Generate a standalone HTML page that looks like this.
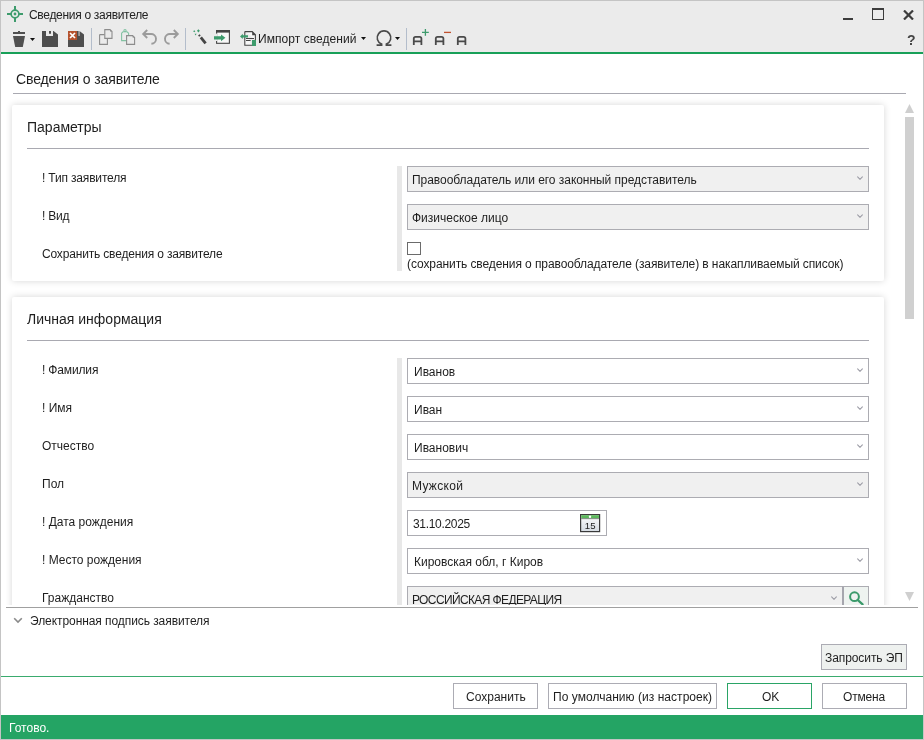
<!DOCTYPE html>
<html><head><meta charset="utf-8">
<style>
*{box-sizing:border-box;margin:0;padding:0}
html,body{width:924px;height:740px;overflow:hidden;background:#fff}
body{position:relative;-webkit-font-smoothing:antialiased;font-family:"Liberation Sans",sans-serif;color:#1e1e1e}
.a{position:absolute}
.t{position:absolute;white-space:pre;font-size:12px;line-height:12px}
.h{font-size:14px;line-height:14px}
.fld{position:absolute;border:1px solid #acacb2;background:#fff;height:26px}
.dis{background:#f0f0f0}
.chev{position:absolute;right:5px;top:8.5px;width:6px;height:4px}
.btn{position:absolute;border:1px solid #acacb4;background:#fff;height:26px;top:683px;font-size:12px;text-align:center}
.card{position:absolute;left:12px;width:872px;background:#fff;border-radius:2px;box-shadow:0 0 7px rgba(0,0,0,.16)}
.sep{position:absolute;height:1px;background:#a9a9b1}
</style></head><body>
<div id="root" class="a" style="left:0;top:0;width:924px;height:740px;will-change:transform">
<!-- window border -->
<div class="a" style="left:0;top:0;width:924px;height:740px;border:1px solid #c4c4c4"></div>
<!-- title + toolbar bg -->
<div class="a" style="left:1px;top:1px;width:922px;height:51px;background:#ebebeb"></div>
<div class="a" style="left:1px;top:52px;width:922px;height:2px;background:#18a058"></div>

<!-- title icon -->
<svg class="a" style="left:6px;top:5px" width="18" height="18" viewBox="0 0 18 18">
 <g fill="none" stroke="#3d9b6c" stroke-width="2">
  <circle cx="9" cy="9" r="3.9" stroke-width="1.7"/>
  <path d="M1 9h4M13 9h4M9 1v4M9 13v4"/>
 </g>
 <circle cx="9" cy="9" r="1.4" fill="#3d9b6c"/>
</svg>
<div class="t" style="left:29px;top:9px;color:#222;letter-spacing:-0.3px">Сведения о заявителе</div>

<!-- window controls -->
<div class="a" style="left:843px;top:18px;width:10px;height:2px;background:#3c3c3c"></div>
<div class="a" style="left:872px;top:8px;width:12px;height:12px;border:1px solid #3c3c3c;border-top-width:2px"></div>
<svg class="a" style="left:903px;top:10px" width="11" height="10" viewBox="0 0 11 10"><path d="M1 0.5L10 9.5M10 0.5L1 9.5" stroke="#3c3c3c" stroke-width="2.2"/></svg>
<div class="t" style="left:907px;top:33px;font-size:14px;line-height:14px;font-weight:bold;color:#444">?</div>

<!-- TOOLBAR -->
<svg class="a" style="left:0;top:0" width="924" height="54" viewBox="0 0 924 54">
 <!-- trash -->
 <g fill="#505050">
  <rect x="18" y="31" width="2" height="1.2"/>
  <rect x="13" y="32" width="12" height="2"/>
  <path d="M13 36H25L22.8 47H15.2Z"/>
  <path d="M30 38H35L32.5 41Z" fill="#111"/>
 </g>
 <!-- save -->
 <path fill="#4e4e4e" fill-rule="evenodd" d="M42 31H53.5L58 34.5V47H42ZM46 31V36H53V31ZM49 31H51V33.5H49Z"/>
 <rect x="49" y="31" width="2" height="2.5" fill="#4e4e4e"/>
 <!-- save x -->
 <path fill="#4e4e4e" d="M68 40H77V31H78.6V36H79.5V31L84 34.5V47H68Z"/>
 <rect x="68" y="31" width="9" height="9" fill="#b5532f"/>
 <path d="M70 33L75 38M75 33L70 38" stroke="#fff" stroke-width="1.7"/>
 <!-- separators -->
 <rect x="91" y="28" width="1" height="22" fill="#b3bdcb"/>
 <rect x="185" y="28" width="1" height="22" fill="#b3bdcb"/>
 <rect x="406" y="28" width="1" height="22" fill="#b3bdcb"/>
 <!-- copy -->
 <g fill="none" stroke="#8c8c8c" stroke-width="1.1">
  <path d="M99.6 34.6H104.6M99.6 34.6V44.4H107.4V38.8"/>
  <path d="M104.8 29.6H110L112 31.6V38.4H104.8Z" fill="#ebebeb"/>
 </g>
 <path d="M110 29.6V31.6H112Z" fill="#8c8c8c"/>
 <!-- paste -->
 <path d="M126.6 40.6H121.6V33.2L123 31.8H127L128.6 33.2V35.4" fill="none" stroke="#82c2a2" stroke-width="1.1"/><circle cx="125" cy="30.6" r="1.1" fill="none" stroke="#82c2a2" stroke-width="1.1"/>
 <path d="M126.6 35.6H132.6L134.6 37.6V44.4H126.6Z" fill="#ebebeb" stroke="#8c8c8c" stroke-width="1.1"/>
 <path d="M132.6 35.6V37.6H134.6Z" fill="#8c8c8c"/>
 <!-- undo / redo -->
 <g fill="none" stroke="#9b9b9b" stroke-width="1.9">
  <path d="M147.2 30L143.2 34L147.2 38M143.4 34H150.8A4.9 4.9 0 0 1 151.4 43.8"/>
  <path d="M173.8 30L177.8 34L173.8 38M177.6 34H170.2A4.9 4.9 0 0 0 169.6 43.8"/>
 </g>
 <!-- magic wand -->
 <path d="M200.8 37.4L205.6 43.4" stroke="#454545" stroke-width="2.8" stroke-linecap="butt"/>
 <path d="M198.6 36.2L200.2 34.8" stroke="#454545" stroke-width="1.6"/>
 <g fill="#3d9b6c">
  <path d="M198.4 29.2L199.8 30.8L198.4 32.6L197 30.8Z"/>
  <path d="M194.2 30.3L195.4 31.3L194.2 32.3L193.2 31.3Z"/>
  <path d="M194.6 33.8H196.6L195.6 35.4Z"/>
 </g>
 <!-- window arrow -->
 <rect x="216.6" y="30.6" width="12.8" height="12.7" fill="#f7f7f7" stroke="#454545" stroke-width="1.1"/>
 <rect x="216" y="30" width="14" height="2.6" fill="#454545"/>
 <rect x="214" y="33.6" width="3.2" height="7.4" fill="#ebebeb"/>
 <path d="M214 36.2H221V34.4L225.4 37.8L221 41.2V39.6H214Z" fill="#3d9b6c"/>
 <!-- import -->
 <path d="M244.8 31.6H252.2L255.4 34.8V40M244.8 31.6V45.2H252" fill="#f7f7f7" stroke="#454545" stroke-width="1.1"/>
 <path d="M252.2 31.2V35.2H255.8Z" fill="#454545"/>
 <rect x="246" y="38" width="8" height="1" fill="#454545"/>
 <rect x="246" y="40" width="4.6" height="1" fill="#454545"/>
 <path d="M240 36.4L242.8 33.8V35.2H248V37.6H242.8V39Z" fill="#3d9b6c"/>
 <rect x="252" y="40" width="4" height="6" fill="#3d9b6c"/>
 <!-- import dropdown arrow -->
 <path d="M361 37H366L363.5 40Z" fill="#111"/>
 <!-- omega -->
 <path d="M376.6 45.1H381.6V44.1A6.8 6.8 0 1 1 386.4 44.1V45.1H391.4" fill="none" stroke="#4a4a4a" stroke-width="1.7"/>
 <path d="M395 37H400L397.5 40Z" fill="#111"/>
 <!-- A+ A- A -->
 <g fill="none" stroke="#4a4a4a" stroke-width="1.8">
  <path d="M413.8 45V38.6Q413.8 36.8 415.6 36.8H419.6Q421.4 36.8 421.4 38.6V45M413.8 41.3H421.4"/>
  <path d="M435.8 45V38.6Q435.8 36.8 437.6 36.8H441.6Q443.4 36.8 443.4 38.6V45M435.8 41.3H443.4"/>
  <path d="M457.8 45V38.6Q457.8 36.8 459.6 36.8H463.6Q465.4 36.8 465.4 38.6V45M457.8 41.3H465.4"/>
 </g>
 <path d="M422 32.4H428.8M425.4 29V35.8" stroke="#3d9b6c" stroke-width="1.3"/>
 <path d="M444 32.4H451" stroke="#c0502e" stroke-width="1.3"/>
</svg>
<div class="t" style="left:258px;top:33px;color:#222;letter-spacing:0.05px">Импорт сведений</div>

<!-- heading -->
<div class="t h" style="left:16px;top:72px;letter-spacing:-0.12px">Сведения о заявителе</div>
<div class="sep" style="left:13px;top:93px;width:893px"></div>

<!-- scroll viewport -->
<div class="a" style="left:6px;top:96px;width:899px;height:509px;overflow:hidden">
 <div class="a" style="left:-6px;top:-96px;width:924px;height:740px">
  <!-- card 1 -->
  <div class="card" style="top:105px;height:176px"></div>
  <div class="t h" style="left:27px;top:120px">Параметры</div>
  <div class="sep" style="left:27px;top:148px;width:842px"></div>
  <div class="t" style="left:42px;top:172px;letter-spacing:-0.17px">! Тип заявителя</div>
  <div class="t" style="left:42px;top:210px;letter-spacing:-0.25px">! Вид</div>
  <div class="t" style="left:42px;top:248px;letter-spacing:-0.17px">Сохранить сведения о заявителе</div>
  <div class="a" style="left:397px;top:166px;width:5px;height:105px;background:#e8e8e8"></div>
  <div class="fld dis" style="left:407px;top:166px;width:462px"><div class="t" style="left:4px;top:7px;letter-spacing:-0.04px">Правообладатель или его законный представитель</div><svg class="chev" viewBox="0 0 6 4"><path d="M0.4 0.5L3 3.3L5.6 0.5" fill="none" stroke="#9c9ca6" stroke-width="1.1"/></svg></div>
  <div class="fld dis" style="left:407px;top:204px;width:462px"><div class="t" style="left:4px;top:7px">Физическое лицо</div><svg class="chev" viewBox="0 0 6 4"><path d="M0.4 0.5L3 3.3L5.6 0.5" fill="none" stroke="#9c9ca6" stroke-width="1.1"/></svg></div>
  <div class="a" style="left:407px;top:242px;width:14px;height:13px;border:1px solid #6b6b6b;background:#fff"></div>
  <div class="t" style="left:407px;top:258px;letter-spacing:-0.09px">(сохранить сведения о правообладателе (заявителе) в накапливаемый список)</div>

  <!-- card 2 -->
  <div class="card" style="top:297px;height:340px"></div>
  <div class="t h" style="left:27px;top:312px">Личная информация</div>
  <div class="sep" style="left:27px;top:340px;width:842px"></div>
  <div class="t" style="left:42px;top:364px;letter-spacing:-0.15px">! Фамилия</div>
  <div class="t" style="left:42px;top:402px">! Имя</div>
  <div class="t" style="left:42px;top:440px">Отчество</div>
  <div class="t" style="left:42px;top:478px">Пол</div>
  <div class="t" style="left:42px;top:516px">! Дата рождения</div>
  <div class="t" style="left:42px;top:554px">! Место рождения</div>
  <div class="t" style="left:42px;top:592px">Гражданство</div>
  <div class="a" style="left:397px;top:358px;width:5px;height:260px;background:#e8e8e8"></div>
  <div class="fld" style="left:407px;top:358px;width:462px"><div class="t" style="left:6px;top:7px">Иванов</div><svg class="chev" viewBox="0 0 6 4"><path d="M0.4 0.5L3 3.3L5.6 0.5" fill="none" stroke="#9c9ca6" stroke-width="1.1"/></svg></div>
  <div class="fld" style="left:407px;top:396px;width:462px"><div class="t" style="left:6px;top:7px">Иван</div><svg class="chev" viewBox="0 0 6 4"><path d="M0.4 0.5L3 3.3L5.6 0.5" fill="none" stroke="#9c9ca6" stroke-width="1.1"/></svg></div>
  <div class="fld" style="left:407px;top:434px;width:462px"><div class="t" style="left:6px;top:7px">Иванович</div><svg class="chev" viewBox="0 0 6 4"><path d="M0.4 0.5L3 3.3L5.6 0.5" fill="none" stroke="#9c9ca6" stroke-width="1.1"/></svg></div>
  <div class="fld dis" style="left:407px;top:472px;width:462px"><div class="t" style="left:4px;top:7px;letter-spacing:0.3px">Мужской</div><svg class="chev" viewBox="0 0 6 4"><path d="M0.4 0.5L3 3.3L5.6 0.5" fill="none" stroke="#9c9ca6" stroke-width="1.1"/></svg></div>
  <div class="fld" style="left:407px;top:510px;width:200px"><div class="t" style="left:5px;top:7px;letter-spacing:-0.32px">31.10.2025</div><svg class="a" style="left:172px;top:3px" width="21" height="19" viewBox="0 0 21 19"><defs><linearGradient id="cg" x1="0" y1="0" x2="0" y2="1"><stop offset="0" stop-color="#fff"/><stop offset="1" stop-color="#d5dbe2"/></linearGradient></defs><rect x="0.6" y="0.6" width="19" height="17" fill="url(#cg)" stroke="#3a3a3a" stroke-width="1.2"/><rect x="1.2" y="1.2" width="17.8" height="3.2" fill="#5cb85c"/><rect x="1.2" y="4.4" width="17.8" height="0.7" fill="#666"/><circle cx="10" cy="2.8" r="1.2" fill="#fff"/><text x="10.2" y="15" text-anchor="middle" style="font-family:'Liberation Sans';font-size:9.6px" fill="#222">15</text></svg></div>
  <div class="fld" style="left:407px;top:548px;width:462px"><div class="t" style="left:6px;top:7px">Кировская обл, г Киров</div><svg class="chev" viewBox="0 0 6 4"><path d="M0.4 0.5L3 3.3L5.6 0.5" fill="none" stroke="#9c9ca6" stroke-width="1.1"/></svg></div>
  <div class="fld dis" style="left:407px;top:586px;width:437px"><div class="t" style="left:4px;top:7px;letter-spacing:-0.62px">РОССИЙСКАЯ ФЕДЕРАЦИЯ</div><svg class="chev" style="right:6px" viewBox="0 0 6 4"><path d="M0.4 0.5L3 3.3L5.6 0.5" fill="none" stroke="#9c9ca6" stroke-width="1.1"/></svg></div>
  <div class="fld" style="left:842px;top:586px;width:27px;background:#eef3f0;border-left:2px solid #a6a6ae"><svg class="a" style="left:3px;top:2px" width="18" height="18" viewBox="0 0 18 18"><circle cx="7.5" cy="7.7" r="4.4" fill="none" stroke="#3a9a6a" stroke-width="2"/><path d="M10.6 10.9L15.6 15.4" stroke="#3a9a6a" stroke-width="2.2" stroke-linecap="round"/></svg></div>
 </div>
</div>

<!-- scrollbar -->
<svg class="a" style="left:904px;top:103px" width="11" height="11" viewBox="0 0 11 11"><path d="M1 10H10L5.5 1Z" fill="#cfcfcf"/></svg>
<svg class="a" style="left:904px;top:591px" width="11" height="11" viewBox="0 0 11 11"><path d="M1 1H10L5.5 10Z" fill="#cfcfcf"/></svg>
<div class="a" style="left:905px;top:117px;width:9px;height:202px;background:#d0d0d0"></div>

<!-- bottom line -->
<div class="a" style="left:6px;top:607px;width:912px;height:1px;background:#a0a0a0"></div>
<svg class="a" style="left:13px;top:617px" width="10" height="7" viewBox="0 0 10 7"><path d="M1.2 1.2L5 5L8.8 1.2" fill="none" stroke="#8a8a8a" stroke-width="1.6"/></svg>
<div class="t" style="left:30px;top:615px;letter-spacing:-0.07px">Электронная подпись заявителя</div>

<div class="btn" style="left:821px;top:644px;width:86px;background:#eef1ef"><div class="t" style="left:3px;top:7px;letter-spacing:-0.08px">Запросить ЭП</div></div>
<div class="a" style="left:1px;top:676px;width:922px;height:1px;background:#3aab6e"></div>

<div class="btn" style="left:453px;width:85px"><div class="t" style="left:12px;top:7px">Сохранить</div></div>
<div class="btn" style="left:548px;width:169px"><div class="t" style="left:4px;top:7px;letter-spacing:0.04px">По умолчанию (из настроек)</div></div>
<div class="btn" style="left:727px;width:85px;border-color:#2aa466"><div class="t" style="left:34px;top:7px">OK</div></div>
<div class="btn" style="left:822px;width:85px"><div class="t" style="left:20px;top:7px;letter-spacing:-0.2px">Отмена</div></div>

<div class="a" style="left:1px;top:715px;width:922px;height:24px;background:#24a464"></div>
<div class="t" style="left:9px;top:722px;color:#fff">Готово.</div>
</div>
</body></html>
